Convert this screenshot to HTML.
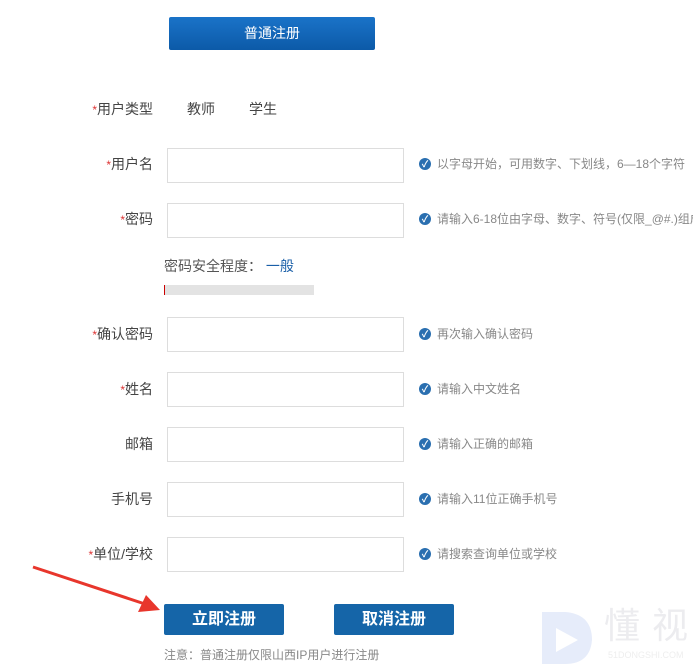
<!DOCTYPE html>
<html><head><meta charset="utf-8"><style>
body{margin:0;width:693px;height:664px;background:#fff;position:relative;overflow:hidden;font-family:"Liberation Sans","Noto Sans CJK SC",sans-serif;}
.a{position:absolute;}
.lbl{position:absolute;right:540px;font-size:14px;color:#444;white-space:nowrap;line-height:18px;}
.lbl i{color:#d33;font-style:normal;font-size:12px;}
.inp{position:absolute;left:167px;width:235px;height:33px;border:1px solid #ddd;}
.tip{position:absolute;left:419px;font-size:12px;color:#888;white-space:nowrap;line-height:16px;}
.tip b{position:absolute;left:0;top:2px;width:12px;height:12px;border-radius:50%;background:#2a6fb0;color:#fff;font-size:9px;line-height:12px;text-align:center;}
.tip span{margin-left:18px;}
.btn{position:absolute;background:#1565a8;color:#fff;font-size:16px;font-weight:bold;text-align:center;border-radius:2px;}
</style></head><body>
<div class="a" style="left:169px;top:17px;width:206px;height:33px;background:linear-gradient(#1a73c8,#0c5aa8);border-radius:2px;color:#fff;font-size:14px;text-align:center;line-height:33px;">普通注册</div>
<div class="lbl" style="top:100px"><i>*</i>用户类型</div>
<div class="a" style="left:187px;top:100px;font-size:14px;color:#444;line-height:18px">教师</div>
<div class="a" style="left:249px;top:100px;font-size:14px;color:#444;line-height:18px">学生</div>

<div class="lbl" style="top:155px"><i>*</i>用户名</div><div class="inp" style="top:148px"></div>
<div class="tip" style="top:156px"><b>✓</b><span>以字母开始，可用数字、下划线，6—18个字符</span></div>

<div class="lbl" style="top:210px"><i>*</i>密码</div><div class="inp" style="top:203px"></div>
<div class="tip" style="top:211px"><b>✓</b><span>请输入6-18位由字母、数字、符号(仅限_@#.)组成</span></div>

<div class="a" style="left:164px;top:257px;font-size:14px;color:#555;line-height:18px">密码安全程度： <span style="color:#1a5fa8">一般</span></div>
<div class="a" style="left:164px;top:285px;width:150px;height:10px;background:#e3e3e3;"></div>
<div class="a" style="left:164px;top:285px;width:1px;height:10px;background:#c00;"></div>

<div class="lbl" style="top:325px"><i>*</i>确认密码</div><div class="inp" style="top:317px"></div>
<div class="tip" style="top:326px"><b>✓</b><span>再次输入确认密码</span></div>

<div class="lbl" style="top:380px"><i>*</i>姓名</div><div class="inp" style="top:372px"></div>
<div class="tip" style="top:381px"><b>✓</b><span>请输入中文姓名</span></div>

<div class="lbl" style="top:435px">邮箱</div><div class="inp" style="top:427px"></div>
<div class="tip" style="top:436px"><b>✓</b><span>请输入正确的邮箱</span></div>

<div class="lbl" style="top:490px">手机号</div><div class="inp" style="top:482px"></div>
<div class="tip" style="top:491px"><b>✓</b><span>请输入11位正确手机号</span></div>

<div class="lbl" style="top:545px"><i>*</i>单位/学校</div><div class="inp" style="top:537px"></div>
<div class="tip" style="top:546px"><b>✓</b><span>请搜索查询单位或学校</span></div>

<svg class="a" style="left:30px;top:562px" width="135" height="55"><line x1="3" y1="5" x2="118" y2="43" stroke="#e8362c" stroke-width="3"/><polygon points="130,48 108,50 116,33" fill="#e8362c"/></svg>

<div class="btn" style="left:164px;top:604px;width:120px;height:31px;line-height:31px;">立即注册</div>
<div class="btn" style="left:334px;top:604px;width:120px;height:31px;line-height:31px;">取消注册</div>
<div class="a" style="left:164px;top:646px;font-size:12px;color:#888">注意：普通注册仅限山西IP用户进行注册</div>

<svg class="a" style="left:540px;top:610px" width="55" height="54"><path d="M2 2 H25 Q52 4 52 30 Q50 54 25 54 H2Z" fill="#e6ecfa"/><path d="M16 18 L38 30 L16 42Z" fill="#fff"/></svg>
<div class="a" style="left:604px;top:606px;font-size:36px;line-height:40px;color:#ececef;letter-spacing:12px;white-space:nowrap">懂视</div>
<div class="a" style="left:608px;top:650px;font-size:9px;color:#eee;white-space:nowrap">51DONGSHI.COM</div>
</body></html>
